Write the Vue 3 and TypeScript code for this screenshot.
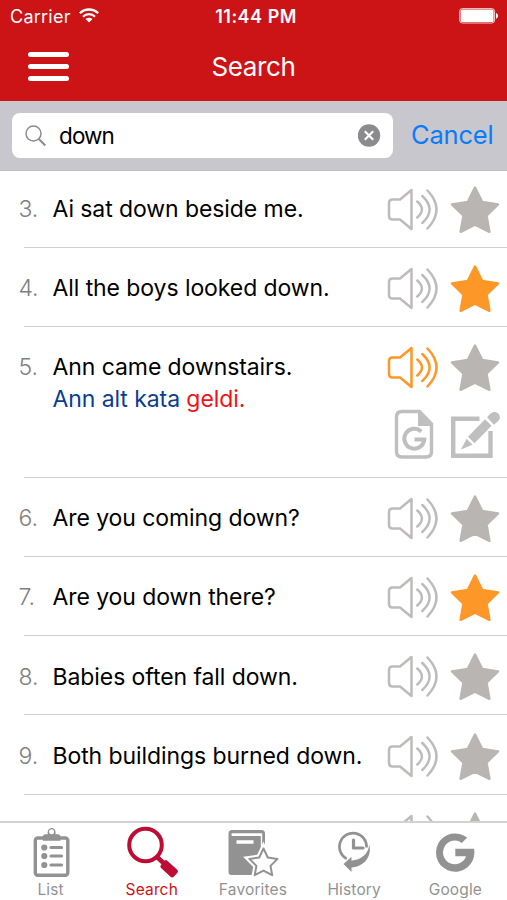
<script setup lang="ts">
import { ref } from 'vue'

interface Sentence {
  id: number
  text: string
  favorite?: boolean
  playing?: boolean
  translation?: { plain: string; marked: string }
}

const query = ref('down')

const sentences = ref<Sentence[]>([
  { id: 3, text: 'Ai sat down beside me.' },
  { id: 4, text: 'All the boys looked down.', favorite: true },
  {
    id: 5,
    text: 'Ann came downstairs.',
    playing: true,
    translation: { plain: 'Ann alt kata', marked: 'geldi.' },
  },
  { id: 6, text: 'Are you coming down?' },
  { id: 7, text: 'Are you down there?', favorite: true },
  { id: 8, text: 'Babies often fall down.' },
  { id: 9, text: 'Both buildings burned down.' },
  { id: 10, text: '' },
])

const tabs = ['List', 'Search', 'Favorites', 'History', 'Google']
const activeTab = ref('Search')
</script>

<template>
  <div class="screen">
    <header class="top">
      <div class="status">
        <div class="carrier">
          <span>Carrier</span>
          <svg class="wifi" width="20" height="15" viewBox="0 0 20 15">
            <g fill="none" stroke="#fff" stroke-width="2.3">
              <path d="M.8 5.3a13 13 0 0 1 18.4 0" />
              <path d="M4 8.7a8.5 8.5 0 0 1 12 0" />
            </g>
            <path d="M6.5 11.1a5 5 0 0 1 7 0L10 14.6z" fill="#fff" />
          </svg>
        </div>
        <div class="time">11:44 PM</div>
        <div class="power">
          <svg width="40" height="16" viewBox="0 0 40 16">
            <rect x=".6" y=".6" width="35" height="14.4" rx="2.8" fill="none" stroke="#fff" stroke-width="1" stroke-opacity=".8" />
            <rect x="1.600" y="1.600" width="33" height="12.400" rx="1.600" fill="#fff" />
            <path d="M37 5c2.700 1 2.700 4.700 0 5.700z" fill="#fff" />
          </svg>
        </div>
      </div>
      <div class="nav">
        <button class="menu" aria-label="Menu"><i></i><i></i><i></i></button>
        <h1>Search</h1>
      </div>
    </header>

    <div class="searchbar">
      <label class="field">
        <svg width="22" height="22" viewBox="0 0 22 22" fill="none" stroke="#8c8c90">
          <circle cx="8.500" cy="8.500" r="7.500" stroke-width="1.500" />
          <path d="M13.800 14l6.500 6.500" stroke-width="2" />
        </svg>
        <input v-model="query" aria-label="Search" />
        <svg class="clear" width="23" height="23" viewBox="0 0 23 23" @click="query = ''">
          <circle cx="11" cy="11.500" r="11.200" fill="#8b8b8d" />
          <path d="M6.800 7.300l8.400 8.400M15.200 7.300l-8.400 8.400" stroke="#fff" stroke-width="2.100" />
        </svg>
      </label>
      <button class="cancel">Cancel</button>
    </div>

    <main class="list">
      <article v-for="s in sentences" :key="s.id" class="row" :class="{ open: s.translation }">
        <span class="num">{{ s.text ? s.id + '.' : '' }}</span>
        <div class="body">
          <p>{{ s.text }}</p>
          <p v-if="s.translation" class="translation">
            {{ s.translation.plain }} <em>{{ s.translation.marked }}</em>
          </p>
        </div>
        <div class="actions">
          <svg class="speaker" :class="{ on: s.playing }" width="52" height="44" viewBox="0 0 52 44">
            <path d="M2 15q0-3.500 3.500-3.500h7.500L24.500 2v39L13 31.500H5.500Q2 31.500 2 28z" />
            <path d="M30.300 13.500q9.200 8 0 16M35.300 8q14.600 13.500 0 27M40.500 2.500q18 19 0 38" />
          </svg>
          <svg class="star" :class="{ on: s.favorite }" width="50" height="50" viewBox="0 0 50 50">
            <path d="M25 2.500l7.200 14.600 15.800 2.300-11.500 11.200 2.900 16.200L25 39.600 10.600 46.800l2.900-16.200L2 19.400l15.800-2.300z" />
          </svg>
        </div>
        <div v-if="s.translation" class="actions extra">
          <svg width="40" height="50" viewBox="0 0 40 50">
            <path d="M8 2.500h17.500L37.500 15v27.500q0 5.500-5.500 5.500H8q-5.500 0-5.500-5.500V8q0-5.500 5.500-5.500z" fill="none" stroke="#bfbfbf" stroke-width="3.400" />
            <path d="M24 2v15h14z" fill="#bfbfbf" />
            <path d="M27.300 22.500A10 10 0 1 0 30.300 30.500H20.500" fill="none" stroke="#bfbfbf" stroke-width="4" />
          </svg>
          <svg width="50" height="50" viewBox="0 0 50 50">
            <path d="M29.500 9.800H3.200V46.700H40.500V22" fill="none" stroke="#bfbfbf" stroke-width="4.400" />
            <path d="M18 27.800L35 10.300l6.500 6.500L24.500 34.300zM16.600 29.800l6 6L11 40.600zM37 8.300l3.500-3.500c5-5 12.500 1.500 8 7l-4.500 4z" fill="#bfbfbf" />
          </svg>
        </div>
      </article>
    </main>

    <footer class="tabs">
      <button v-for="tab in tabs" :key="tab" :class="{ active: tab === activeTab }" @click="activeTab = tab">
        <svg v-if="tab === 'List'" width="54" height="54" viewBox="0 0 54 54">
          <rect x="11.300" y="13" width="32.500" height="37.300" rx="2.500" fill="none" stroke="currentColor" stroke-width="3.400" />
          <path d="M18.800 15.800v-4q0-2.500 3-2.500h2c-1.500-8.500 9.200-8.500 7.700 0h2q3 0 3 2.500v4z" fill="currentColor" />
          <circle cx="27.600" cy="6.700" r="2.500" fill="#fff" />
          <g fill="currentColor"><circle cx="20.300" cy="22.500" r="3.100" /><circle cx="20.300" cy="31" r="3.100" /><circle cx="20.300" cy="40" r="3.100" /></g>
          <path d="M27 22.500h10.500M27 31h10.500M27 40h10.500" stroke="currentColor" stroke-width="3.200" stroke-linecap="round" />
        </svg>
        <svg v-else-if="tab === 'Search'" width="54" height="54" viewBox="0 0 54 54">
          <circle cx="20.500" cy="20" r="16.300" fill="none" stroke="#bd0d35" stroke-width="4" />
          <path d="M31.500 31.500l7 6.500" stroke="#bd0d35" stroke-width="4.500" />
          <path d="M39.500 35.500q1.200-1 2.500 0L52 44.500q1.800 1.500.5 3.200l-3.800 4q-1.500 1.500-3.200 0L35.800 42.800q-1-1.200 0-2.500z" fill="#bd0d35" />
        </svg>
        <svg v-else-if="tab === 'Favorites'" width="54" height="54" viewBox="0 0 54 54">
          <path d="M6 5q-3.500 0-3.500 3.500V47q0 3 3 3h28V11H6.500c-1.500 0-1.500-2.800 0-2.800H36.200V34H39V8.500Q39 5 35.500 5z" fill="currentColor" />
          <path d="M33 11h1.800v26H33z" fill="currentColor" />
          <path d="M10.500 17h17" stroke="#fff" stroke-width="3.500" />
          <path d="M37.500 23.500l4.300 9 9.700 1.400-7 7 1.700 9.300-8.700-4.600-8.800 4.600 1.700-9.300-7-7 9.800-1.400z" fill="#fff" stroke="#fff" stroke-width="6" />
          <path d="M37.500 23.500l4.300 9 9.700 1.400-7 7 1.700 9.300-8.700-4.600-8.800 4.600 1.700-9.300-7-7 9.800-1.400z" fill="#fff" stroke="currentColor" stroke-width="2" stroke-linejoin="round" />
        </svg>
        <svg v-else-if="tab === 'History'" width="54" height="54" viewBox="0 0 54 54">
          <path d="M19.800 33.800A13.600 13.600 0 1 1 39.600 22.500" fill="none" stroke="currentColor" stroke-width="2.600" />
          <path d="M26.500 15v8h9.500" fill="none" stroke="currentColor" stroke-width="3.200" stroke-linecap="round" stroke-linejoin="round" />
          <path d="M42.300 19.500C45 31 38 41.500 24.500 42.500v4.400L16.500 39l8-7.300v4C34 34.500 41 30 42.300 19.500z" fill="currentColor" />
        </svg>
        <svg v-else width="54" height="54" viewBox="0 0 54 54">
          <path d="M39.200 12.600L33.800 17.900A11.800 11.800 0 1 0 38 31.200H27.300V23.700H46Q46.400 26 46.400 27.500A19.200 19.200 0 1 1 39.200 12.600z" fill="currentColor" />
        </svg>
        <span>{{ tab }}</span>
      </button>
    </footer>
  </div>
</template>

<style>
body {
  margin: 0;
}
</style>

<style scoped>
.screen {
  width: 507px;
  height: 900px;
  display: flex;
  flex-direction: column;
  overflow: hidden;
  background: #fff;
  color: #000;
  font-family: Inter, "Liberation Sans", sans-serif;
}
button {
  padding: 0;
  border: 0;
  background: none;
  font: inherit;
}
svg {
  display: block;
  flex: none;
}
.top {
  flex: none;
  height: 101px;
  background: #cc1316;
  color: #fff;
}
.status {
  display: grid;
  grid-template-columns: 1fr auto 1fr;
  align-items: center;
  height: 32px;
  padding: 0 8px 0 10px;
  font-size: 18px;
}
.carrier {
  display: flex;
  align-items: center;
  gap: 8px;
  letter-spacing: 0.25px;
}
.wifi {
  margin-top: -1px;
}
.time {
  font-weight: 600;
  padding-left: 3px;
  letter-spacing: 0.5px;
}
.power {
  display: flex;
  justify-content: flex-end;
}
.nav {
  display: grid;
  grid-template-columns: 1fr auto 1fr;
  align-items: center;
  height: 69px;
}
.menu {
  display: flex;
  flex-direction: column;
  gap: 7px;
  width: 41px;
  margin-left: 28px;
}
.menu i {
  height: 5px;
  border-radius: 3px;
  background: #fff;
}
h1 {
  margin: 0;
  font-size: 26px;
  font-weight: 400;
  letter-spacing: -0.4px;
}
.searchbar {
  flex: none;
  box-sizing: border-box;
  display: flex;
  align-items: center;
  height: 70px;
  padding: 0 13.500px 0 12px;
  background: #c8c7cd;
  border-bottom: 1px solid #bcbbc0;
}
.field {
  box-sizing: border-box;
  display: flex;
  align-items: center;
  width: 381px;
  height: 45px;
  padding: 0 12px 0 13px;
  border-radius: 8px;
  background: #fff;
}
.field input {
  flex: 1;
  min-width: 0;
  padding: 0 0 1px;
  margin-left: 12px;
  border: 0;
  outline: 0;
  background: none;
  color: #000;
  font: 400 22.500px Inter, "Liberation Sans", sans-serif;
  letter-spacing: -0.9px;
}
.cancel {
  margin-left: auto;
  padding-bottom: 2px;
  color: #087bfa;
  font-size: 25.500px;
  letter-spacing: -0.2px;
}
.list {
  flex: 1;
  min-height: 0;
  overflow: hidden;
  display: flex;
  flex-direction: column;
}
.row {
  flex: none;
  box-sizing: border-box;
  position: relative;
  display: grid;
  grid-template-columns: 28.500px 1fr auto;
  grid-template-rows: 79.2px;
  height: 79.2px;
  margin-left: 24px;
  padding-right: 7.500px;
  border-bottom: 1px solid #cfcfd1;
  font-size: 23px;
  letter-spacing: -0.08px;
  line-height: 32px;
}
.row:first-child {
  margin-top: -2.4px;
}
.row.open {
  grid-template-rows: 79.2px 60px;
  height: 150.9px;
}
.num {
  width: 19px;
  margin-left: -5.500px;
  padding-top: 24.300px;
  color: #808080;
  font-weight: 300;
  white-space: nowrap;
}
.body {
  padding-top: 24.300px;
  white-space: nowrap;
}
p {
  margin: 0;
}
.translation {
  color: #0b3c91;
}
.translation em {
  color: #f01216;
  font-style: normal;
}
.actions {
  display: flex;
  align-items: center;
  gap: 10.500px;
  padding-top: 3px;
}
.extra {
  grid-column: 3;
  justify-content: flex-end;
  align-items: flex-start;
  gap: 16px;
}
.speaker {
  fill: none;
  stroke: #bdbcbb;
  stroke-width: 2.5;
  stroke-linecap: round;
  stroke-linejoin: round;
}
.speaker.on {
  stroke: #fd9727;
}
.star {
  fill: #b9b5b3;
  stroke: #b9b5b3;
  stroke-width: 2.500;
  stroke-linejoin: round;
}
.star.on {
  fill: #fd9727;
  stroke: #fd9727;
}
.tabs {
  flex: none;
  box-sizing: border-box;
  display: grid;
  grid-template-columns: repeat(5, 1fr);
  height: 79px;
  padding-right: 1px;
  border-top: 2px solid #d2d2d2;
}
.tabs button {
  display: flex;
  flex-direction: column;
  align-items: center;
  padding-top: 2px;
  color: #929292;
  font-size: 15.500px;
  line-height: 21px;
  letter-spacing: 0.15px;
}
.tabs .active {
  color: #cc1316;
}
</style>
